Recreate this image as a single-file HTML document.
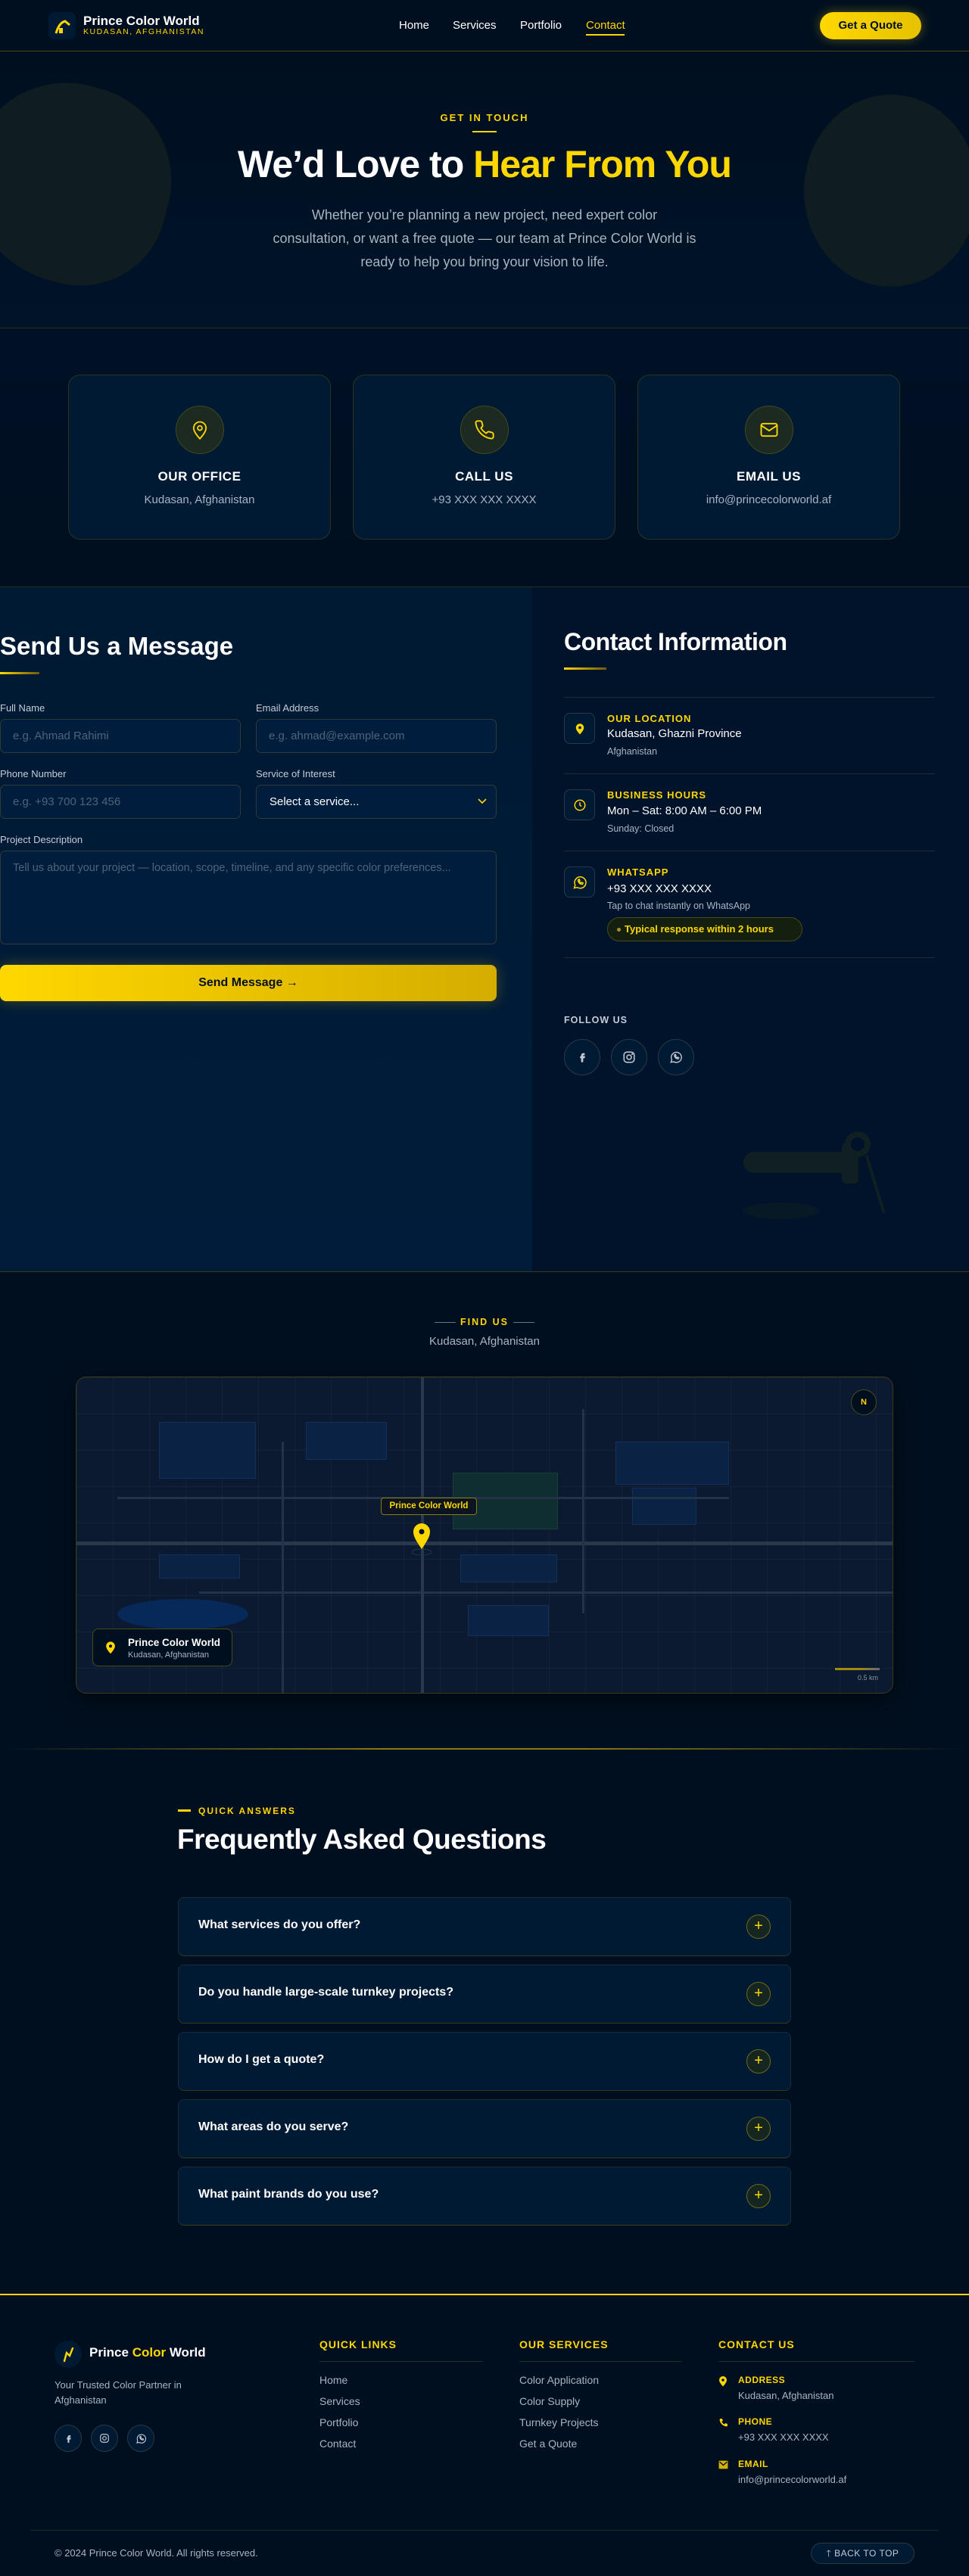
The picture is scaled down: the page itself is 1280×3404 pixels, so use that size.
<!DOCTYPE html>
<html><head><meta charset="utf-8"><style>
*{margin:0;padding:0;box-sizing:border-box}
body{width:1280px;height:3404px;background:#000f1f;font-family:"Liberation Sans",sans-serif;color:#fff;position:relative;overflow:hidden}
.a{position:absolute}
.y{color:#ffd700}
.c{text-align:center}
.card{position:absolute;top:495px;width:347px;height:218px;background:#001a33;border:1px solid #2a3420;border-radius:16px;text-align:center}
.ic{width:64px;height:64px;border-radius:50%;background:#1c2a22;border:1px solid #3f4a1a;margin:40px auto 0;display:flex;align-items:center;justify-content:center}
.card h3{font-size:17px;margin-top:20px;letter-spacing:.5px}
.card p{font-size:15px;color:#a9b4c2;margin-top:12px}
label{position:absolute;font-size:13px;color:#c5ccd6}
.in{position:absolute;height:45px;background:#001d3d;border:1px solid #2e3b35;border-radius:7px;font-size:15px;color:#4f6378;padding:13px 16px}
.it{position:absolute;left:745px;width:490px}
.ib{position:absolute;left:0;width:41px;height:41px;border-radius:8px;background:#001a33;border:1px solid #2a3a44;display:flex;align-items:center;justify-content:center}
.it h4{position:absolute;left:57px;font-size:13px;color:#ffd700;letter-spacing:1px}
.it .t{position:absolute;left:57px;font-size:15px;color:#fff}
.it .s{position:absolute;left:57px;font-size:12.5px;color:#a9b4c2}
.hr{position:absolute;left:745px;width:490px;height:1px;background:#1e2a30}
.soc{position:absolute;width:48px;height:48px;border-radius:50%;background:#001a33;border:1px solid #2a3a44;display:flex;align-items:center;justify-content:center}
.faq{position:absolute;left:235px;width:810px;height:78px;background:#001a33;border:1px solid #1a2b3a;border-bottom:1px solid #3a3a1a;border-radius:8px}
.faq span{position:absolute;left:26px;top:27px;font-size:16px;font-weight:bold}
.faq i{position:absolute;right:26px;top:22px;width:32px;height:32px;border-radius:50%;border:1px solid #6b6a1a;background:#14261f;color:#ffd700;font-style:normal;font-size:20px;line-height:29px;text-align:center}
.fh{position:absolute;top:3090px;font-size:14px;font-weight:bold;color:#ffd700;letter-spacing:1px;padding-bottom:14px;border-bottom:1px solid #2a2f1c}
.fl{position:absolute;font-size:14px;color:#a9b4c2}
.fs{position:absolute;top:3204px;width:36px;height:36px;border-radius:50%;background:#001a33;border:1px solid #2a3a44;display:flex;align-items:center;justify-content:center}
</style></head><body>
<!-- NAV -->
<div class="a" style="left:0;top:0;width:1280px;height:68px;background:#000f1f;border-bottom:1px solid #4a4a10"></div>
<div class="a" style="left:64px;top:16px;width:36px;height:36px;border-radius:8px;background:#001a33"><svg width="36" height="36"><path d="M10 28 Q14 14 22 12 L28 17" stroke="#ffd700" stroke-width="3" fill="none"/><rect x="14" y="21" width="5" height="7" fill="#ffd700"/></svg></div>
<div class="a" style="left:110px;top:18px;font-size:17px;font-weight:bold">Prince Color World</div>
<div class="a y" style="left:110px;top:36px;font-size:10.5px;letter-spacing:1.5px">KUDASAN, AFGHANISTAN</div>
<div class="a" style="left:527px;top:25px;font-size:15px">Home</div>
<div class="a" style="left:598px;top:25px;font-size:15px">Services</div>
<div class="a" style="left:687px;top:25px;font-size:15px">Portfolio</div>
<div class="a y" style="left:774px;top:25px;font-size:15px">Contact</div>
<div class="a" style="left:774px;top:45px;width:51px;height:2px;background:#ffd700"></div>
<div class="a" style="left:1083px;top:16px;width:134px;height:36px;border-radius:18px;background:linear-gradient(90deg,#ffd700,#e6c200);box-shadow:0 0 14px rgba(255,215,0,.35);color:#001020;font-weight:bold;font-size:15px;text-align:center;line-height:36px">Get a Quote</div>
<!-- HERO -->
<div class="a" style="left:0;top:69px;width:1280px;height:365px;background:linear-gradient(180deg,#000f20,#001329);border-bottom:1px solid #2a2f1c;overflow:hidden">
<div class="a" style="left:-40px;top:42px;width:265px;height:262px;border-radius:50% 50% 45% 55%;background:#0f1c20;transform:rotate(15deg)"></div>
<div class="a" style="left:1062px;top:56px;width:230px;height:254px;border-radius:50%;background:#0f1c20"></div>
</div>
<div class="a y c" style="left:0;width:1280px;top:148px;font-size:13px;font-weight:bold;letter-spacing:2px">GET IN TOUCH</div>
<div class="a" style="left:624px;top:173px;width:32px;height:2px;background:#ffd700"></div>
<div class="a c" style="left:0;width:1280px;top:188px;font-size:50px;font-weight:bold;letter-spacing:-1px">We’d Love to <span class="y">Hear From You</span></div>
<div class="a c" style="left:0;width:1280px;top:269px;font-size:18px;line-height:31px;color:#a9b4c2;white-space:nowrap">Whether you’re planning a new project, need expert color<br>consultation, or want a free quote — our team at Prince Color World is<br>ready to help you bring your vision to life.</div>
<!-- CARDS -->
<div class="a" style="left:0;top:435px;width:1280px;height:340px;background:linear-gradient(180deg,#001126,#000f1f)"></div>
<div class="card" style="left:90px"><div class="ic"><svg width="28" height="28" viewBox="0 0 24 24" fill="none" stroke="#ffd700" stroke-width="1.6"><path d="M12 22s7-7 7-12a7 7 0 0 0-14 0c0 5 7 12 7 12z"/><circle cx="12" cy="10" r="2.5"/></svg></div><h3>OUR OFFICE</h3><p>Kudasan, Afghanistan</p></div>
<div class="card" style="left:466px"><div class="ic"><svg width="28" height="28" viewBox="0 0 24 24" fill="none" stroke="#ffd700" stroke-width="1.6"><path d="M22 16.9v3a2 2 0 0 1-2.2 2 19.8 19.8 0 0 1-8.6-3.1 19.5 19.5 0 0 1-6-6A19.8 19.8 0 0 1 2.1 4.2 2 2 0 0 1 4.1 2h3a2 2 0 0 1 2 1.700c.1 1 .4 1.9.7 2.8a2 2 0 0 1-.5 2.1L8 9.9a16 16 0 0 0 6 6l1.3-1.3a2 2 0 0 1 2.1-.4c.9.3 1.8.6 2.8.7a2 2 0 0 1 1.7 2z"/></svg></div><h3>CALL US</h3><p>+93 XXX XXX XXXX</p></div>
<div class="card" style="left:842px"><div class="ic"><svg width="28" height="28" viewBox="0 0 24 24" fill="none" stroke="#ffd700" stroke-width="1.6"><rect x="3" y="5" width="18" height="14" rx="2"/><path d="M3 7l9 6 9-6"/></svg></div><h3>EMAIL US</h3><p>info@princecolorworld.af</p></div>
<!-- FORM SECTION -->
<div class="a" style="left:0;top:775px;width:1280px;height:1px;background:#2a2f1c"></div>
<div class="a" style="left:0;top:776px;width:703px;height:904px;background:linear-gradient(180deg,#001a33,#001c3a)"></div>
<div class="a" style="left:703px;top:776px;width:577px;height:904px;background:#00132a"></div>
<div class="a" style="left:0;top:835px;font-size:33px;font-weight:bold">Send Us a Message</div>
<div class="a" style="left:0;top:888px;width:52px;height:3px;background:linear-gradient(90deg,#ffd700,#6a5a10)"></div>
<label style="left:0;top:928px">Full Name</label>
<label style="left:338px;top:928px">Email Address</label>
<div class="in" style="left:0;top:950px;width:318px">e.g. Ahmad Rahimi</div>
<div class="in" style="left:338px;top:950px;width:318px">e.g. ahmad@example.com</div>
<label style="left:0;top:1015px">Phone Number</label>
<label style="left:338px;top:1015px">Service of Interest</label>
<div class="in" style="left:0;top:1037px;width:318px">e.g. +93 700 123 456</div>
<div class="in" style="left:338px;top:1037px;width:318px;color:#fff;padding-left:17px">Select a service...<svg class="a" style="right:12px;top:16px" width="12" height="10"><path d="M1 2l5 5 5-5" stroke="#ffd700" stroke-width="1.6" fill="none"/></svg></div>
<label style="left:0;top:1102px">Project Description</label>
<div class="in" style="left:0;top:1124px;width:656px;height:124px;padding-top:14px;font-size:14.5px">Tell us about your project — location, scope, timeline, and any specific color preferences...</div>
<div class="a" style="left:0;top:1275px;width:656px;height:48px;border-radius:8px;background:linear-gradient(90deg,#ffd700,#d4ad00);box-shadow:0 0 18px rgba(255,215,0,.25);color:#001020;font-weight:bold;font-size:16px;text-align:center;line-height:48px">Send Message →</div>
<div class="a" style="left:745px;top:830px;font-size:32px;font-weight:bold;letter-spacing:-.5px">Contact Information</div>
<div class="a" style="left:745px;top:882px;width:56px;height:3px;background:linear-gradient(90deg,#ffd700,#6a5a10)"></div>
<div class="hr" style="top:921px"></div>
<div class="it" style="top:942px"><div class="ib"><svg width="18" height="18" viewBox="0 0 24 24"><path d="M12 22s7-7 7-12a7 7 0 0 0-14 0c0 5 7 12 7 12z" fill="#ffd700"/><circle cx="12" cy="10" r="2.5" fill="#001a33"/></svg></div><h4 style="top:0">OUR LOCATION</h4><div class="t" style="top:19px">Kudasan, Ghazni Province</div><div class="s" style="top:44px">Afghanistan</div></div>
<div class="hr" style="top:1022px"></div>
<div class="it" style="top:1043px"><div class="ib"><svg width="18" height="18" viewBox="0 0 24 24" fill="none" stroke="#ffd700" stroke-width="2"><circle cx="12" cy="12" r="9"/><path d="M12 7v5l3 2"/></svg></div><h4 style="top:0">BUSINESS HOURS</h4><div class="t" style="top:20px">Mon – Sat: 8:00 AM – 6:00 PM</div><div class="s" style="top:45px">Sunday: Closed</div></div>
<div class="hr" style="top:1124px"></div>
<div class="it" style="top:1145px"><div class="ib"><svg width="20" height="20" viewBox="0 0 24 24" fill="none" stroke="#ffd700" stroke-width="1.8"><path d="M3 21l1.6-4.6A9 9 0 1 1 8 20z"/><path d="M9 8c0 4 3 7 7 7l1-2-2-1-1 1c-1.5-.5-2.5-1.5-3-3l1-1-1-2z"/></svg></div><h4 style="top:0">WHATSAPP</h4><div class="t" style="top:21px">+93 XXX XXX XXXX</div><div class="s" style="top:45px">Tap to chat instantly on WhatsApp</div>
<div class="a" style="left:57px;top:67px;width:258px;height:32px;border-radius:16px;background:#14200f;border:1px solid #4a4a15;color:#ffd700;font-size:13px;font-weight:bold;line-height:30px;padding-left:22px"><span class="a" style="left:12px;top:13px;width:5px;height:5px;border-radius:50%;background:#a89020"></span>Typical response within 2 hours</div></div>
<div class="hr" style="top:1265px"></div>
<div class="a" style="left:745px;top:1341px;font-size:12.5px;font-weight:bold;letter-spacing:1px;color:#c5ccd6">FOLLOW US</div>
<div class="soc" style="left:745px;top:1373px"><svg width="16" height="16" viewBox="0 0 24 24"><path d="M14 8h3V4h-3a4 4 0 0 0-4 4v2H8v4h2v8h4v-8h3l1-4h-4V8z" fill="#c5ccd6"/></svg></div>
<div class="soc" style="left:807px;top:1373px"><svg width="18" height="18" viewBox="0 0 24 24" fill="none" stroke="#c5ccd6" stroke-width="2"><rect x="3" y="3" width="18" height="18" rx="5"/><circle cx="12" cy="12" r="4"/><circle cx="17.5" cy="6.5" r=".6"/></svg></div>
<div class="soc" style="left:869px;top:1373px"><svg width="18" height="18" viewBox="0 0 24 24" fill="none" stroke="#c5ccd6" stroke-width="1.8"><path d="M3 21l1.6-4.6A9 9 0 1 1 8 20z"/><path d="M9 8c0 4 3 7 7 7l1-2-2-1-1 1c-1.5-.5-2.5-1.5-3-3l1-1-1-2z"/></svg></div>
<svg class="a" style="left:960px;top:1480px" width="220" height="140"><g fill="#0f1f22"><rect x="22" y="42" width="150" height="28" rx="14"/><rect x="152" y="30" width="22" height="54" rx="6"/><circle cx="173" cy="32" r="17"/><ellipse cx="72" cy="120" rx="50" ry="11" opacity=".5"/></g><circle cx="173" cy="32" r="9" fill="#001229"/><line x1="185" y1="48" x2="207" y2="121" stroke="#0f1f22" stroke-width="4" stroke-linecap="round"/></svg>
<!-- MAP SECTION -->
<div class="a" style="left:0;top:1680px;width:1280px;height:1px;background:#3a3a14"></div>
<div class="a" style="left:574px;top:1747px;width:28px;height:1px;background:#6a7280"></div>
<div class="a" style="left:678px;top:1747px;width:28px;height:1px;background:#6a7280"></div>
<div class="a y c" style="left:0;width:1280px;top:1740px;font-size:12.5px;font-weight:bold;letter-spacing:2px">FIND US</div>
<div class="a c" style="left:0;width:1280px;top:1764px;font-size:15px;color:#a9b4c2">Kudasan, Afghanistan</div>
<div class="a" style="left:100px;top:1819px;width:1080px;height:419px;border-radius:14px;border:1px solid #3a3a18;overflow:hidden;background-color:#0b1a30;background-image:linear-gradient(rgba(255,255,255,.035) 1px,transparent 1px),linear-gradient(90deg,rgba(255,255,255,.035) 1px,transparent 1px);background-size:48px 48px;box-shadow:0 10px 30px rgba(0,0,0,.5)">
<div class="a" style="left:109px;top:59px;width:128px;height:75px;background:#0a2344;border:1px solid #13305a"></div>
<div class="a" style="left:303px;top:59px;width:107px;height:50px;background:#0a2344;border:1px solid #13305a"></div>
<div class="a" style="left:497px;top:126px;width:139px;height:75px;background:#0f2e32;border:1px solid #1a3f3a"></div>
<div class="a" style="left:712px;top:85px;width:150px;height:57px;background:#0a2344;border:1px solid #13305a"></div>
<div class="a" style="left:734px;top:146px;width:85px;height:49px;background:#0a2344;border:1px solid #13305a"></div>
<div class="a" style="left:109px;top:234px;width:107px;height:32px;background:#0a2344;border:1px solid #13305a"></div>
<div class="a" style="left:507px;top:234px;width:128px;height:37px;background:#0a2344;border:1px solid #13305a"></div>
<div class="a" style="left:517px;top:301px;width:107px;height:41px;background:#0a2344;border:1px solid #13305a"></div>
<div class="a" style="left:54px;top:293px;width:173px;height:40px;border-radius:50%;background:#07295a"></div>
<div class="a" style="left:0;top:217px;width:1080px;height:5px;background:#2a384c"></div>
<div class="a" style="left:54px;top:158px;width:808px;height:3px;background:#223247"></div>
<div class="a" style="left:162px;top:283px;width:918px;height:3px;background:#223247"></div>
<div class="a" style="left:455px;top:0;width:4px;height:419px;background:#2a384c"></div>
<div class="a" style="left:271px;top:85px;width:3px;height:334px;background:#223247"></div>
<div class="a" style="left:668px;top:42px;width:3px;height:270px;background:#223247"></div>
<div class="a" style="left:402px;top:159px;width:127px;height:23px;background:#0c1420;border:1px solid #8a7a18;border-radius:4px;color:#ffd700;font-size:11.5px;font-weight:bold;text-align:center;line-height:21px">Prince Color World</div>
<svg class="a" style="left:441px;top:187px" width="30" height="50"><ellipse cx="15" cy="44" rx="13" ry="4" fill="none" stroke="#1e3a44"/><path d="M15 40 C7 28 4 23 4 17 a11 11 0 0 1 22 0 c0 6-3 11-11 23z" fill="#ffd700"/><circle cx="15" cy="17" r="3.5" fill="#001020"/></svg>
<div class="a" style="left:1023px;top:16px;width:34px;height:34px;border-radius:50%;background:#000f1f;border:1px solid #4a4a18;color:#ffd700;font-size:11px;font-weight:bold;text-align:center;line-height:32px">N</div>
<div class="a" style="left:21px;top:332px;width:185px;height:50px;background:#000f1f;border:1px solid #4a4a18;border-radius:8px">
<svg class="a" style="left:16px;top:15px" width="14" height="18" viewBox="0 0 24 30"><path d="M12 29s10-10 10-17a10 10 0 0 0-20 0c0 7 10 17 10 17z" fill="#ffd700"/><circle cx="12" cy="12" r="3.5" fill="#000f1f"/></svg>
<div class="a" style="left:46px;top:10px;font-size:13.5px;font-weight:bold">Prince Color World</div>
<div class="a" style="left:46px;top:28px;font-size:11px;color:#a9b4c2">Kudasan, Afghanistan</div></div>
<div class="a" style="left:1002px;top:384px;width:59px;height:3px;background:linear-gradient(90deg,#a08a10 55%,#667)"></div>
<div class="a" style="left:1032px;top:392px;font-size:9px;color:#8a94a0">0.5 km</div>
</div>
<!-- divider -->
<div class="a" style="left:0;top:2310px;width:1280px;height:2px;background:linear-gradient(90deg,transparent,#8a7a10 40%,#8a7a10 60%,transparent)"></div>
<!-- FAQ -->
<div class="a" style="left:235px;top:2391px;width:17px;height:3px;background:#ffd700"></div>
<div class="a y" style="left:262px;top:2386px;font-size:12px;font-weight:bold;letter-spacing:2px">QUICK ANSWERS</div>
<div class="a" style="left:234px;top:2410px;font-size:37px;font-weight:bold;letter-spacing:-.5px">Frequently Asked Questions</div>
<div class="faq" style="top:2507px"><span>What services do you offer?</span><i>+</i></div>
<div class="faq" style="top:2596px"><span>Do you handle large-scale turnkey projects?</span><i>+</i></div>
<div class="faq" style="top:2685px"><span>How do I get a quote?</span><i>+</i></div>
<div class="faq" style="top:2774px"><span>What areas do you serve?</span><i>+</i></div>
<div class="faq" style="top:2863px"><span>What paint brands do you use?</span><i>+</i></div>
<!-- FOOTER -->
<div class="a" style="left:0;top:3031px;width:1280px;height:2px;background:#ffd700"></div>
<div class="a" style="left:72px;top:3093px;width:36px;height:36px;border-radius:50%;background:#001a33"><svg width="36" height="36"><path d="M13 27 L16 16 L20 20 L24 10" stroke="#ffd700" stroke-width="2.4" fill="none" stroke-linecap="round"/></svg></div>
<div class="a" style="left:118px;top:3099px;font-size:17px;font-weight:bold">Prince <span class="y">Color</span> World</div>
<div class="a" style="left:72px;top:3142px;width:200px;font-size:13px;line-height:20px;color:#a9b4c2">Your Trusted Color Partner in Afghanistan</div>
<div class="fs" style="left:72px"><svg width="13" height="13" viewBox="0 0 24 24"><path d="M14 8h3V4h-3a4 4 0 0 0-4 4v2H8v4h2v8h4v-8h3l1-4h-4V8z" fill="#c5ccd6"/></svg></div>
<div class="fs" style="left:120px"><svg width="14" height="14" viewBox="0 0 24 24" fill="none" stroke="#c5ccd6" stroke-width="2"><rect x="3" y="3" width="18" height="18" rx="5"/><circle cx="12" cy="12" r="4"/></svg></div>
<div class="fs" style="left:168px"><svg width="15" height="15" viewBox="0 0 24 24" fill="none" stroke="#c5ccd6" stroke-width="1.8"><path d="M3 21l1.6-4.6A9 9 0 1 1 8 20z"/><path d="M9 8c0 4 3 7 7 7l1-2-2-1-1 1c-1.5-.5-2.5-1.5-3-3l1-1-1-2z"/></svg></div>
<div class="fh" style="left:422px;width:216px">QUICK LINKS</div>
<div class="fh" style="left:686px;width:215px">OUR SERVICES</div>
<div class="fh" style="left:949px;width:259px">CONTACT US</div>
<div class="fl" style="left:422px;top:3137px">Home</div>
<div class="fl" style="left:422px;top:3165px">Services</div>
<div class="fl" style="left:422px;top:3193px">Portfolio</div>
<div class="fl" style="left:422px;top:3221px">Contact</div>
<div class="fl" style="left:686px;top:3137px">Color Application</div>
<div class="fl" style="left:686px;top:3165px">Color Supply</div>
<div class="fl" style="left:686px;top:3193px">Turnkey Projects</div>
<div class="fl" style="left:686px;top:3221px">Get a Quote</div>
<svg class="a" style="left:949px;top:3139px" width="12" height="15" viewBox="0 0 24 30"><path d="M12 29s10-10 10-17a10 10 0 0 0-20 0c0 7 10 17 10 17z" fill="#ffd700"/><circle cx="12" cy="12" r="3.5" fill="#000f1f"/></svg>
<div class="a y" style="left:975px;top:3138px;font-size:12px;font-weight:bold;letter-spacing:.5px">ADDRESS</div>
<div class="fl" style="left:975px;top:3158px;font-size:13px">Kudasan, Afghanistan</div>
<svg class="a" style="left:949px;top:3194px" width="13" height="15" viewBox="0 0 24 24"><path d="M5 2h4l2 5-3 2a12 12 0 0 0 7 7l2-3 5 2v4a2 2 0 0 1-2 2A18 18 0 0 1 3 4a2 2 0 0 1 2-2z" fill="#ffd700"/></svg>
<div class="a y" style="left:975px;top:3193px;font-size:12px;font-weight:bold;letter-spacing:.5px">PHONE</div>
<div class="fl" style="left:975px;top:3213px;font-size:13px">+93 XXX XXX XXXX</div>
<svg class="a" style="left:949px;top:3251px" width="13" height="12" viewBox="0 0 24 22"><rect x="1" y="1" width="22" height="20" rx="2" fill="#d4b000"/><path d="M3 4l9 8 9-8" stroke="#000f1f" stroke-width="2.5" fill="none"/></svg>
<div class="a y" style="left:975px;top:3249px;font-size:12px;font-weight:bold;letter-spacing:.5px">EMAIL</div>
<div class="fl" style="left:975px;top:3269px;font-size:13px">info@princecolorworld.af</div>
<div class="a" style="left:40px;top:3343px;width:1200px;height:1px;background:#1f2a2a"></div>
<div class="a" style="left:72px;top:3366px;font-size:13px;color:#a9b4c2">© 2024 Prince Color World. All rights reserved.</div>
<div class="a" style="left:1071px;top:3360px;width:137px;height:28px;border-radius:14px;background:#001a33;border:1px solid #2a3a44;color:#c5ccd6;font-size:12px;line-height:26px;letter-spacing:.5px;text-align:center">🡑 BACK TO TOP</div>
</body></html>
